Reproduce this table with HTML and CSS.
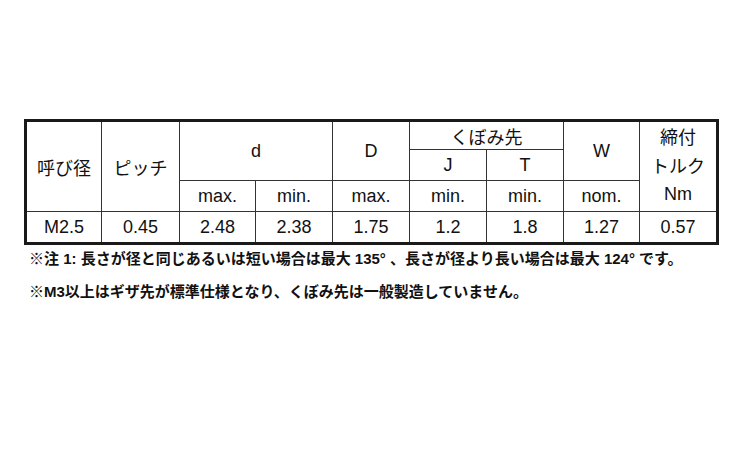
FILE: index.html
```html
<!DOCTYPE html>
<html lang="ja">
<head>
<meta charset="utf-8">
<title>くぼみ先 寸法表</title>
<link rel="stylesheet" href="styles.css">
</head>
<body>
<div class="page">
  <table class="spec">
    <colgroup>
      <col class="c1"><col class="c2"><col class="c3"><col class="c4"><col class="c5"><col class="c6"><col class="c7"><col class="c8"><col class="c9">
    </colgroup>
    <tr class="r1">
      <td rowspan="3" class="jp">呼び径</td>
      <td rowspan="3" class="jp">ピッチ</td>
      <td rowspan="2" colspan="2">d</td>
      <td rowspan="2">D</td>
      <td colspan="2" class="jp">くぼみ先</td>
      <td rowspan="2">W</td>
      <td rowspan="3" class="last torque"><span class="jp">締付</span><br><span class="jp">トルク</span><br>Nm</td>
    </tr>
    <tr class="r2">
      <td>J</td>
      <td>T</td>
    </tr>
    <tr class="r3">
      <td>max.</td>
      <td>min.</td>
      <td>max.</td>
      <td>min.</td>
      <td>min.</td>
      <td>nom.</td>
    </tr>
    <tr class="r4">
      <td>M2.5</td>
      <td>0.45</td>
      <td>2.48</td>
      <td>2.38</td>
      <td>1.75</td>
      <td>1.2</td>
      <td>1.8</td>
      <td>1.27</td>
      <td class="last">0.57</td>
    </tr>
  </table>
  <p class="note">※注 1: 長さが径と同じあるいは短い場合は最大 135° 、長さが径より長い場合は最大 124° です。</p>
  <p class="note">※M3以上はギザ先が標準仕様となり、くぼみ先は一般製造していません。</p>
</div>
</body>
</html>
```
FILE: styles.css
```css
html, body {
  margin: 0;
  padding: 0;
  background: #ffffff;
}

body {
  font-family: "Liberation Sans", "Noto Sans CJK JP", sans-serif;
  color: #111111;
}

.page {
  padding: 119px 0 0 24px;
}

.spec {
  border-collapse: separate;
  border-spacing: 0;
  table-layout: fixed;
  width: 695px;
  border: 3px solid #1a1a1a;
  font-size: 18px;
}

.c1 { width: 75px; }
.c2 { width: 78px; }
.c3 { width: 76px; }
.c4 { width: 77px; }
.c5 { width: 77px; }
.c6 { width: 77px; }
.c7 { width: 77px; }
.c8 { width: 76px; }
.c9 { width: 76px; }

.spec td {
  padding: 0;
  text-align: center;
  vertical-align: middle;
  border-right: 1px solid #333333;
  border-bottom: 1px solid #333333;
  line-height: 20px;
}

.spec td.last {
  border-right: none;
}

.spec .r4 td {
  border-bottom: none;
}

.r1 { height: 28px; }
.r2 { height: 31px; }
.r3 { height: 31px; }
.r4 { height: 30px; }

.jp {
  font-family: "Noto Sans CJK JP", sans-serif;
  font-size: 18px;
  font-weight: 400;
}

.spec td.torque {
  line-height: 27px;
  padding-bottom: 2px;
}

.note {
  margin: 0 0 0 5px;
  font-size: 15px;
  font-weight: bold;
  line-height: 28px;
  color: #111111;
  white-space: nowrap;
}

.note + .note {
  margin-top: 5px;
}
```
